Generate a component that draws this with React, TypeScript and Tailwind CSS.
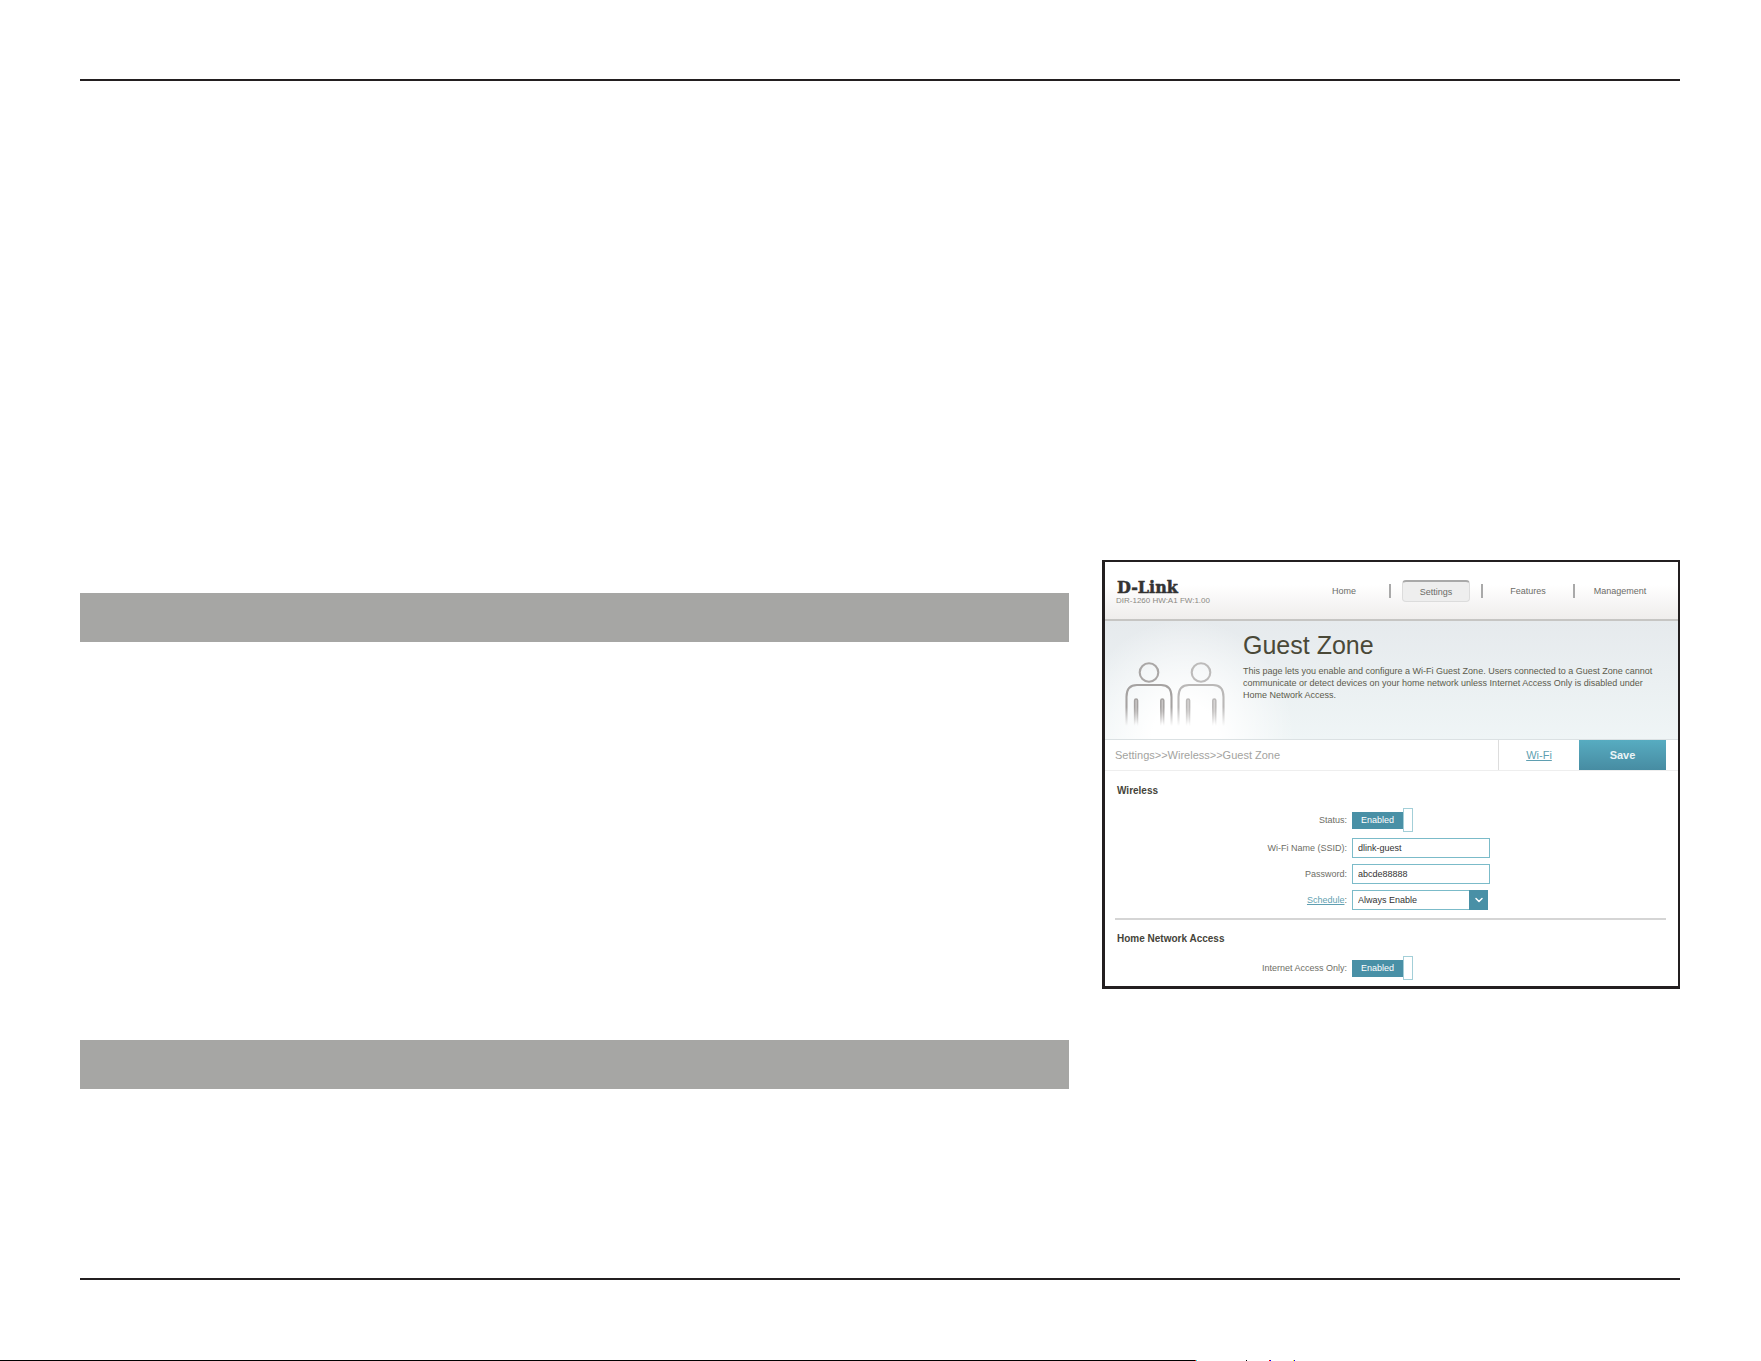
import React, { useState } from "react";
import { ChevronDown } from "lucide-react";

function Person({ x, opacity }: { x: number; opacity: number }) {
  return (
    <g transform={`translate(${x} 0)`} opacity={opacity} fill="none">
      <circle cx="24" cy="10.5" r="9.3" stroke="#aaa7a6" strokeWidth="2.1" />
      <path d="M1.5 64V35C1.500 27 5.500 23 12 23H36C42.500 23 46.500 27 46.500 35V64" stroke="url(#fade)" strokeWidth="2.1" />
      <path
        d="M9.600 64V38.500a1.500 1.500 0 0 1 3 0V64M35.800 64V38.500a1.500 1.500 0 0 1 3 0V64"
        stroke="url(#fade)"
        strokeWidth="1.5"
        fill="url(#armFill)"
      />
    </g>
  );
}

function GuestsIcon() {
  return (
    <svg width="100" height="66" viewBox="0 0 100 66" aria-hidden="true">
      <defs>
        <linearGradient id="fade" gradientUnits="userSpaceOnUse" x1="0" y1="22" x2="0" y2="64">
          <stop offset="0" stopColor="#a5a2a1" />
          <stop offset="0.55" stopColor="#a5a2a1" />
          <stop offset="1" stopColor="#a5a2a1" stopOpacity="0" />
        </linearGradient>
        <linearGradient id="armFill" gradientUnits="userSpaceOnUse" x1="0" y1="36" x2="0" y2="62">
          <stop offset="0" stopColor="#c9c6c5" />
          <stop offset="0.5" stopColor="#c9c6c5" />
          <stop offset="1" stopColor="#c9c6c5" stopOpacity="0" />
        </linearGradient>
      </defs>
      <Person x={0} opacity={1} />
      <Person x={52} opacity={0.75} />
    </svg>
  );
}

function NavItem({ label, active = false }: { label: string; active?: boolean }) {
  return (
    <a
      href="#"
      className={
        active
          ? "flex h-[22px] w-[68px] items-center justify-center rounded-[4px] border border-t-2 border-[#dcdcdc] border-t-[#a9a9a9] bg-[#eeeeee]"
          : "flex h-[22px] w-[68px] items-center justify-center"
      }
    >
      {label}
    </a>
  );
}

function NavBar() {
  return <span className="h-[14px] w-[2px] bg-[#a9a9a9]" />;
}

function Toggle({ id }: { id: string }) {
  const [on, setOn] = useState(true);
  return (
    <button
      id={id}
      type="button"
      role="switch"
      aria-checked={on}
      onClick={() => setOn(!on)}
      className="flex h-6 items-center"
    >
      <span className="flex h-[17px] w-[51px] items-center justify-center bg-[#4990a6] text-white">
        {on ? "Enabled" : "Disabled"}
      </span>
      <span className="h-6 w-[10px] border border-[#a3cfd8] bg-white" />
    </button>
  );
}

function Row({ id, label, children }: { id: string; label: React.ReactNode; children: React.ReactNode }) {
  return (
    <div className="grid grid-cols-[232fr_314fr] items-center gap-[5px]">
      <label htmlFor={id} className="text-right text-[#6e6e66]">
        {label}
      </label>
      <div className="flex">{children}</div>
    </div>
  );
}

const field = "h-5 w-[138px] border border-[#7bbbc9] bg-white px-[5px] text-[#333333] outline-none";

function RouterPanel() {
  return (
    <section className="overflow-hidden border-2 border-b-[3px] border-l-[3px] border-[#231f20] bg-white text-[9px] leading-3">
      <header className="flex h-[59px] items-center justify-between border-b-2 border-[#c6c5c3] bg-gradient-to-b from-white from-40% to-[#efedec] pr-6 pl-[11px]">
        <div className="pt-1">
          <div className="pl-px font-['DejaVu_Serif'] text-[16px] leading-[17px] font-bold text-[#333333] [-webkit-text-stroke:0.5px_#333333]">
            D-Link
          </div>
          <div className="text-[8px] leading-[10px] text-[#8b8983]">DIR-1260 HW:A1 FW:1.00</div>
        </div>
        <nav className="flex items-center gap-[11px] pt-px text-[#6c6c68]">
          <NavItem label="Home" />
          <NavBar />
          <NavItem label="Settings" active />
          <NavBar />
          <NavItem label="Features" />
          <NavBar />
          <NavItem label="Management" />
        </nav>
      </header>

      <div className="flex h-[119px] border-b border-[#dbe1e3] bg-[radial-gradient(ellipse_110px_120px_at_80px_100%,white_30%,transparent),linear-gradient(#e6eaed,#eff5f6)] pl-[20px]">
        <div className="w-[118px] shrink-0 pt-[41px]">
          <GuestsIcon />
        </div>
        <div className="max-w-[418px] pt-[9px] text-[#5c5b4c]">
          <h1 className="mb-[5px] text-[25px] leading-[30px] text-[#4a4938]">Guest Zone</h1>
          <p className="leading-3">
            This page lets you enable and configure a Wi-Fi Guest Zone. Users connected to a Guest Zone cannot
            communicate or detect devices on your home network unless Internet Access Only is disabled under Home
            Network Access.
          </p>
        </div>
      </div>

      <div className="flex h-[31px] border-b border-[#eeeeee] pr-3 pl-[10px] text-[11px]">
        <div className="flex flex-1 items-center text-[#a3a3a0]">Settings&gt;&gt;Wireless&gt;&gt;Guest Zone</div>
        <a
          href="#"
          className="flex w-[81px] items-center justify-center border-l border-[#dddddd] text-[#5f9fb1] underline"
        >
          Wi-Fi
        </a>
        <button type="button" className="w-[87px] bg-gradient-to-b from-[#57acc1] to-[#478ca2] font-bold text-[#eaf4f7]">
          Save
        </button>
      </div>

      <div className="pr-3 pl-[10px]">
        <h2 className="px-[2px] pt-[14px] pb-[11px] text-[10px] font-bold text-[#45443a]">Wireless</h2>
        <Row id="status" label="Status:">
          <Toggle id="status" />
        </Row>
        <div className="flex flex-col gap-[6px] border-b-2 border-[#d5d5d5] pt-[6px] pb-2">
          <Row id="ssid" label="Wi-Fi Name (SSID):">
            <input id="ssid" type="text" defaultValue="dlink-guest" className={field} />
          </Row>
          <Row id="password" label="Password:">
            <input id="password" type="text" defaultValue="abcde88888" className={field} />
          </Row>
          <Row
            id="schedule"
            label={
              <>
                <a href="#" className="text-[#5f9fb1] underline">
                  Schedule
                </a>
                :
              </>
            }
          >
            <div className="relative">
              <select
                id="schedule"
                className="h-5 w-[136px] appearance-none border border-[#7bbbc9] bg-white pl-[5px] text-[#333333] outline-none"
              >
                <option>Always Enable</option>
              </select>
              <span className="pointer-events-none absolute inset-y-0 right-0 flex w-[19px] items-center justify-center bg-[#4990a6] text-white">
                <ChevronDown size={12} strokeWidth={3} />
              </span>
            </div>
          </Row>
        </div>
        <h2 className="px-[2px] pt-[13px] pb-[11px] text-[10px] font-bold text-[#45443a]">Home Network Access</h2>
        <Row id="internet-only" label="Internet Access Only:">
          <Toggle id="internet-only" />
        </Row>
        <div className="h-[6px]" />
      </div>
    </section>
  );
}

export default function App() {
  return (
    <div className="flex min-h-screen flex-col bg-white font-['Liberation_Sans',Arial,sans-serif]">
      <main className="mr-[81px] ml-20 flex flex-1 flex-col pt-[79px]">
        <hr className="border-t-2 border-[#231f20]" />
        <div className="grid grid-cols-[989fr_578fr] items-start gap-[33px] pt-[479px]">
          <div className="flex flex-col gap-[398px] pt-[33px]">
            <div className="h-[49px] bg-[#a6a6a4]" />
            <div className="h-[49px] bg-[#a6a6a4]" />
          </div>
          <RouterPanel />
        </div>
        <hr className="mt-auto mb-20 border-t-2 border-[#231f20]" />
      </main>
      <div className="flex h-px">
        <div className="flex-[1195] bg-black" />
        <div className="flex flex-[566]">
          <span className="w-px bg-[#ff0000]" />
          <span className="w-px bg-[#00ffff]" />
          <span className="ml-[49px] w-px bg-black" />
          <span className="ml-[22px] w-px bg-[#ff0000]" />
          <span className="w-px bg-[#0000ff]" />
          <span className="ml-[22px] w-px bg-[#ffff00]" />
          <span className="w-px bg-[#0000ff]" />
        </div>
      </div>
    </div>
  );
}
